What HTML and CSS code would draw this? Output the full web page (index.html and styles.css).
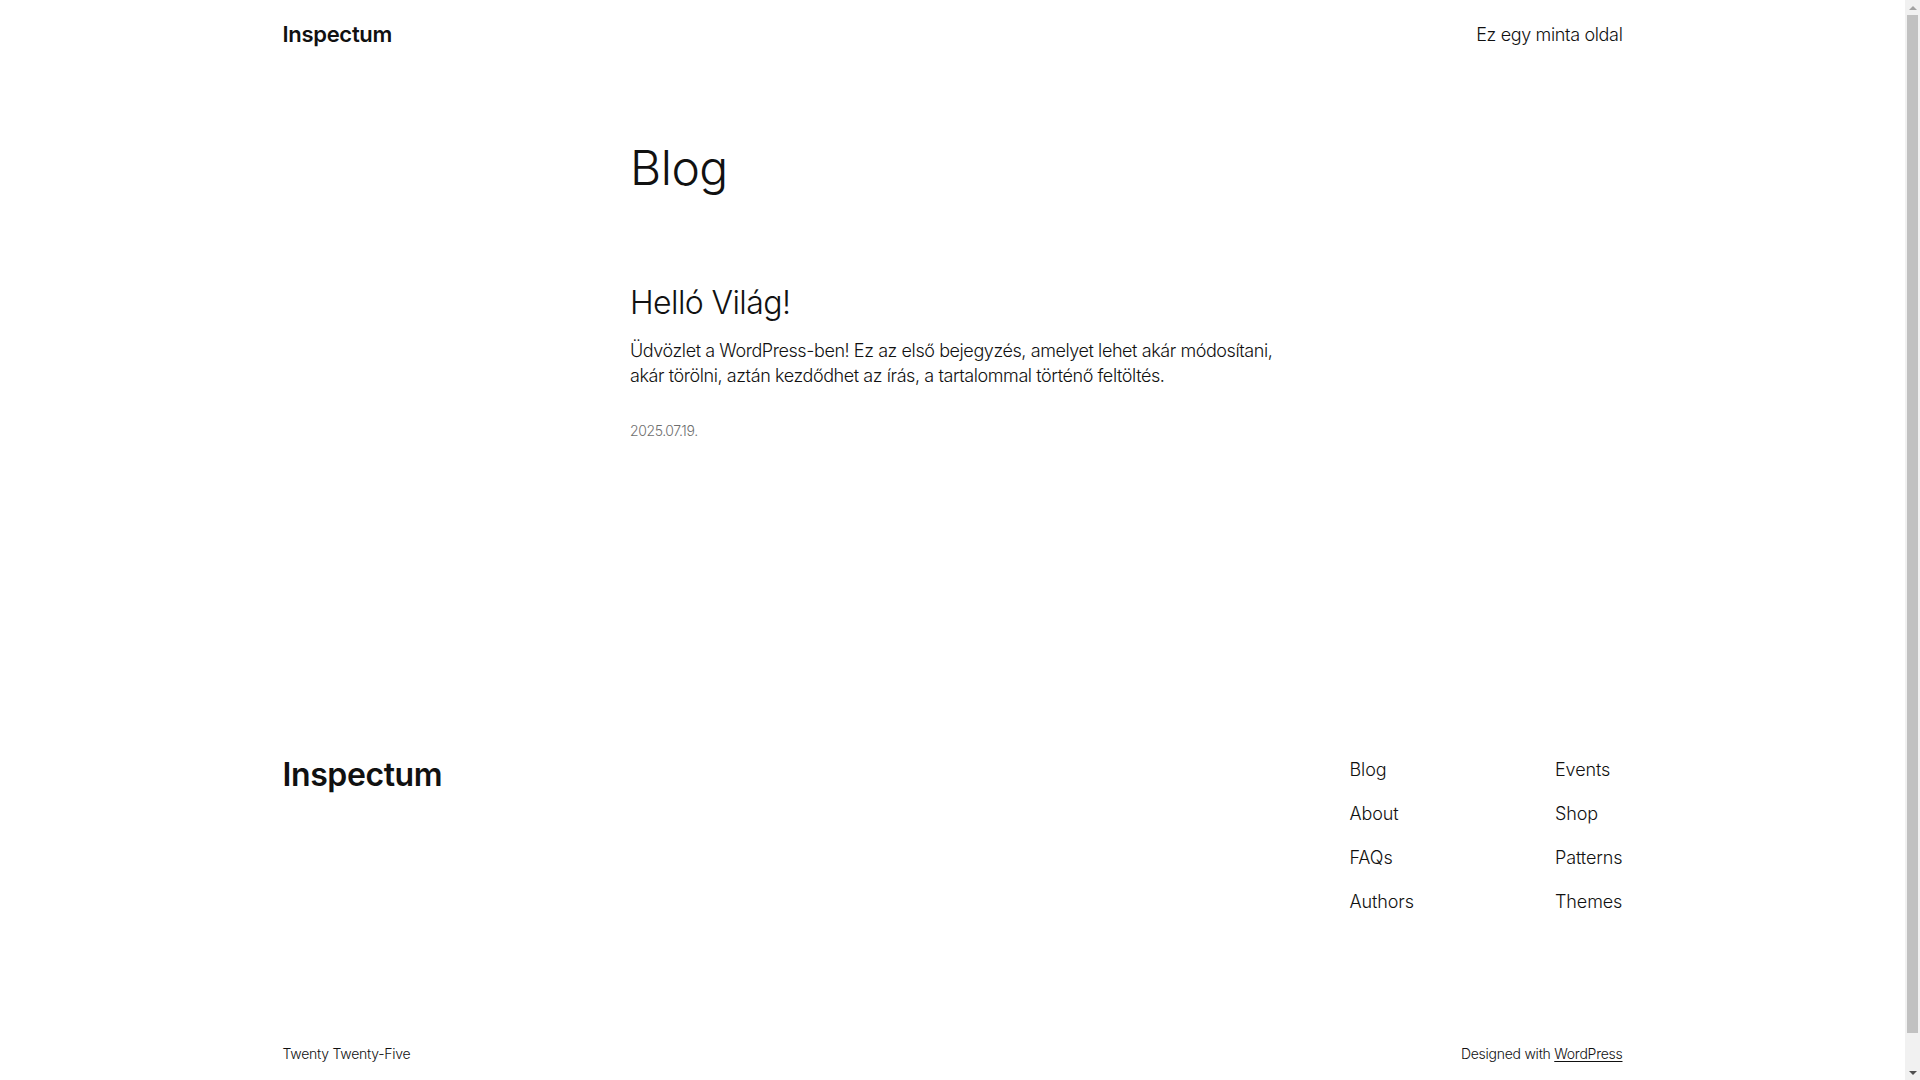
FILE: index.html
```html
<!DOCTYPE html>
<html lang="hu">
<head>
<meta charset="utf-8">
<title>Blog – Inspectum</title>
<link rel="stylesheet" href="styles.css">
</head>
<body>
<div class="page">
<header class="site-header">
  <div class="wide header-row">
    <a class="site-title" href="#">Inspectum</a>
    <nav class="header-nav"><a href="#">Ez egy minta oldal</a></nav>
  </div>
</header>
<main class="site-main">
  <div class="content">
    <h1 class="page-title">Blog</h1>
    <article class="post">
      <h2 class="post-title"><a href="#">Helló Világ!</a></h2>
      <p class="post-excerpt">Üdvözlet a WordPress-ben! Ez az első bejegyzés, amelyet lehet akár módosítani, akár törölni, aztán kezdődhet az írás, a tartalommal történő feltöltés.</p>
      <time class="post-date">2025.07.19.</time>
    </article>
  </div>
</main>
<footer class="site-footer">
  <div class="wide footer-top">
    <a class="footer-title" href="#">Inspectum</a>
    <div class="footer-navs">
      <ul class="footer-nav">
        <li><a href="#">Blog</a></li>
        <li><a href="#">About</a></li>
        <li><a href="#">FAQs</a></li>
        <li><a href="#">Authors</a></li>
      </ul>
      <ul class="footer-nav">
        <li><a href="#">Events</a></li>
        <li><a href="#">Shop</a></li>
        <li><a href="#">Patterns</a></li>
        <li><a href="#">Themes</a></li>
      </ul>
    </div>
  </div>
  <div class="wide footer-bottom">
    <p class="credit">Twenty Twenty-Five</p>
    <p class="credit">Designed with <a class="credit-link" href="#">WordPress</a></p>
  </div>
</footer>
</div>
<div class="scrollbar" aria-hidden="true">
  <span class="sb-arrow sb-up"></span>
  <span class="sb-thumb"></span>
  <span class="sb-arrow sb-down"></span>
</div>
</body>
</html>
```
FILE: styles.css
```css
html, body {
  margin: 0;
  padding: 0;
  background: #ffffff;
}
body {
  font-family: "Inter", "Liberation Sans", sans-serif;
  font-weight: 300;
  font-size: 18px;
  line-height: 1.4;
  letter-spacing: -0.1px;
  color: #111111;
}
.page {
  margin-right: 15px;
}
a {
  color: inherit;
  text-decoration: none;
}
p, h1, h2, ul {
  margin: 0;
}
.wide {
  width: 1340px;
  margin: 0 auto;
}
.site-header {
  padding: 19px 0;
}
.header-row {
  display: flex;
  justify-content: space-between;
  align-items: center;
}
.site-title {
  font-size: 22px;
  font-weight: 600;
  letter-spacing: -0.3px;
  line-height: 1.4;
}
.header-nav {
  font-size: 18px;
  letter-spacing: -0.35px;
}
.site-main {
  padding-top: 72px;
}
.content {
  width: 645px;
  margin: 0 auto;
}
.page-title {
  font-size: 48px;
  font-weight: 300;
  line-height: 1.125;
  letter-spacing: -0.5px;
}
.post {
  margin-top: 90px;
  display: flex;
  flex-direction: column;
}
.post-title {
  font-size: 32px;
  font-weight: 300;
  line-height: 1.125;
  letter-spacing: -0.6px;
}
.post-excerpt {
  margin-top: 17px;
  font-size: 18px;
  line-height: 1.4;
  letter-spacing: -0.42px;
}
.post-date {
  margin-top: 33px;
  font-size: 14px;
  letter-spacing: -0.4px;
  color: #6f6f6f;
}
.site-footer {
  padding-top: 312px;
  padding-bottom: 51px;
}
.footer-top {
  display: flex;
  justify-content: space-between;
  align-items: flex-start;
}
.footer-title {
  font-size: 32px;
  font-weight: 600;
  line-height: 1.4;
  letter-spacing: -0.4px;
}
.footer-navs {
  width: 273px;
  display: flex;
  justify-content: space-between;
  padding-top: 4px;
}
.footer-nav {
  list-style: none;
  padding: 0;
  display: flex;
  flex-direction: column;
  gap: 19px;
  font-size: 18px;
  line-height: 25.2px;
}
.footer-bottom {
  margin-top: 129px;
  display: flex;
  justify-content: space-between;
  align-items: center;
}
.credit {
  font-size: 14px;
  line-height: 1.4;
  letter-spacing: -0.25px;
}
.credit-link {
  text-decoration: underline;
  text-decoration-thickness: 1px;
  text-underline-offset: 2px;
}

/* classic window scrollbar drawn over the right edge */
.scrollbar {
  position: fixed;
  top: 0;
  right: 0;
  width: 15px;
  height: 100vh;
  background: #f1f1f1;
  display: flex;
  flex-direction: column;
  align-items: center;
}
.sb-arrow {
  width: 15px;
  height: 15px;
  display: flex;
  align-items: center;
  justify-content: center;
  flex: none;
}
.sb-arrow::before {
  content: "";
  width: 0;
  height: 0;
  border-left: 4px solid transparent;
  border-right: 4px solid transparent;
}
.sb-up::before {
  border-bottom: 4px solid #a3a3a3;
}
.sb-down::before {
  border-top: 4px solid #505050;
}
.sb-thumb {
  width: 11px;
  height: 1018px;
  background: #c1c1c1;
  flex: none;
}
.sb-down {
  margin-top: auto;
}
```
